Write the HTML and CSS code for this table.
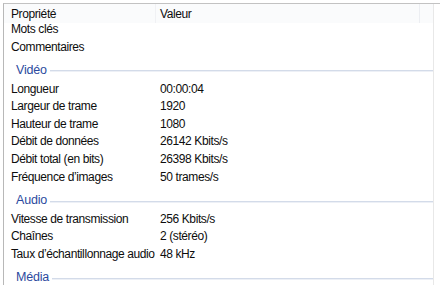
FILE: index.html
```html
<!DOCTYPE html>
<html lang="fr">
<head>
<meta charset="utf-8">
<title>Détails</title>
<link rel="stylesheet" href="styles.css">
</head>
<body>
<div class="frame">
  <div class="list">
    <div class="head">
      <div class="hcol hname">Propriété</div>
      <div class="hcol hvalue">Valeur</div>
      <div class="hcol hrest"></div>
    </div>
    <div class="body">
      <div class="scroll">
        <div class="row"><span class="name">Mots clés</span><span class="value"></span></div>
        <div class="row"><span class="name">Commentaires</span><span class="value"></span></div>

        <div class="group"><span class="gtitle">Vidéo</span><span class="gline"></span></div>
        <div class="row"><span class="name">Longueur</span><span class="value">00:00:04</span></div>
        <div class="row"><span class="name">Largeur de trame</span><span class="value">1920</span></div>
        <div class="row"><span class="name">Hauteur de trame</span><span class="value">1080</span></div>
        <div class="row"><span class="name">Débit de données</span><span class="value">26142 Kbits/s</span></div>
        <div class="row"><span class="name">Débit total (en bits)</span><span class="value">26398 Kbits/s</span></div>
        <div class="row"><span class="name">Fréquence d’images</span><span class="value">50 trames/s</span></div>

        <div class="group"><span class="gtitle">Audio</span><span class="gline"></span></div>
        <div class="row"><span class="name">Vitesse de transmission</span><span class="value">256 Kbits/s</span></div>
        <div class="row"><span class="name">Chaînes</span><span class="value">2 (stéréo)</span></div>
        <div class="row"><span class="name">Taux d’échantillonnage audio</span><span class="value">48 kHz</span></div>

        <div class="group"><span class="gtitle">Média</span><span class="gline"></span></div>
      </div>
    </div>
  </div>
</div>
</body>
</html>
```

FILE: styles.css
```css
html, body {
  margin: 0;
  padding: 0;
  background: #ffffff;
}

body {
  font-family: "Liberation Sans", Arial, sans-serif;
  font-size: 12px;
  letter-spacing: -0.4px;
  color: #0d0d0d;
  overflow: hidden;
}

.frame {
  margin: 3px 0 0 3px;
  height: 282px;
  border-top: 1px solid #c2c2c2;
  border-left: 1px solid #b8b8b8;
  display: flex;
}

.list {
  width: 429px;
  border-right: 1px solid #e8e8e8;
  display: flex;
  flex-direction: column;
  overflow: hidden;
}

/* column header */
.head {
  height: 19px;
  flex: none;
  display: flex;
  background: #fafbfc;
  line-height: 20px;
}

.hcol {
  box-sizing: border-box;
  white-space: nowrap;
}

.hname {
  width: 152px;
  padding-left: 7px;
  border-right: 1px solid #f0f1f4;
}

.hvalue {
  width: 264px;
  padding-left: 4px;
  border-right: 1px solid #eceef2;
}

.hrest {
  flex: 1;
}

/* rows; the list is scrolled by a couple of pixels */
.body {
  flex: 1;
}

.scroll {
  margin-top: -2px;
}

.row {
  display: flex;
  height: 17.6px;
  line-height: 17.6px;
  white-space: nowrap;
}

.name {
  box-sizing: border-box;
  width: 156px;
  padding-left: 7px;
  flex: none;
}

.value {
  flex: 1;
}

/* group headings */
.group {
  display: flex;
  align-items: center;
  height: 24.5px;
  box-sizing: border-box;
  padding: 5.5px 0 1.4px 12px;
  line-height: 17.6px;
}

.gtitle {
  color: #2b4a9e;
  font-size: 12.5px;
  letter-spacing: -0.2px;
}

.gline {
  flex: 1;
  height: 1px;
  margin: 1px 0 0 3px;
  background: #d3dbe9;
  box-shadow: 0 1px 0 #edf0f6;
}
```
